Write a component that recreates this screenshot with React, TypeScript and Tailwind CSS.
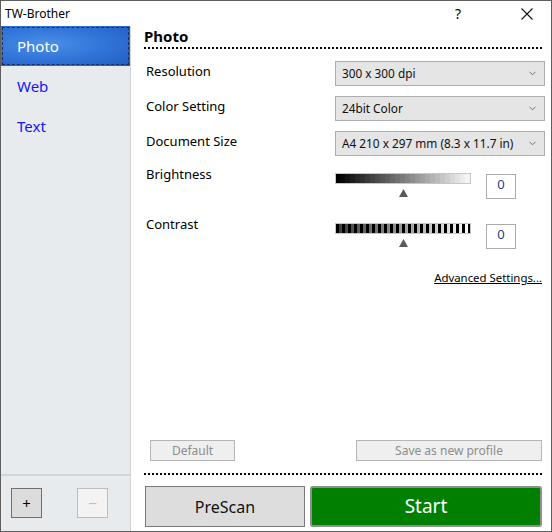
import React from 'react';

const FONT = "font-['Noto_Sans','Liberation_Sans',sans-serif]";

function SelectBox({ value }: { value: string }) {
  return (
    <div className="flex h-[25px] w-[210px] items-center justify-between border border-[#adadad] bg-[#e5e5e5] pl-[6px] pr-[8px] text-[11.8px] text-[#111]">
      <span>{value}</span>
      <svg width="7" height="5" viewBox="0 0 7 5">
        <path d="M0.5 0.8 L3.5 3.8 L6.5 0.8" fill="none" stroke="#707070" strokeWidth="1" />
      </svg>
    </div>
  );
}

function BrightnessBar() {
  const steps = Array.from({ length: 27 }, (_, i) => i);
  return (
    <svg width="136" height="11" viewBox="0 0 136 11">
      {steps.map((i) => {
        const v = Math.round((i / 26) * 245);
        return <rect key={i} x={i * 5} y={0} width={5.2} height={11} fill={`rgb(${v},${v},${v})`} />;
      })}
      <rect x="0.5" y="0.5" width="135" height="10" fill="none" stroke="#c6c6c6" />
    </svg>
  );
}

function ContrastBar() {
  const stripes = Array.from({ length: 23 }, (_, i) => i);
  return (
    <svg width="136" height="11" viewBox="0 0 136 11">
      {stripes.map((i) => {
        const v = Math.round(60 + (i / 22) * 195);
        return (
          <g key={i}>
            <rect x={i * 6} y={0} width={6} height={11} fill={`rgb(${v},${v},${v})`} />
            <rect x={i * 6 + 1} y={0} width={3} height={11} fill="#000" />
          </g>
        );
      })}
      <rect x="0.5" y="0.5" width="135" height="10" fill="none" stroke="#c6c6c6" />
    </svg>
  );
}

function Slider({ kind }: { kind: 'brightness' | 'contrast' }) {
  return (
    <div className="mt-[8px] flex items-start">
      <div className="flex w-[136px] flex-col items-center">
        {kind === 'brightness' ? <BrightnessBar /> : <ContrastBar />}
        <svg className="mt-[5px]" width="9" height="8" viewBox="0 0 9 8">
          <path d="M4.5 0 L9 8 L0 8 Z" fill="#5a5a5a" />
        </svg>
      </div>
      <div className="ml-[15px] mt-px flex h-[25px] w-[30px] justify-center border border-[#ababab] bg-white pt-[1px] text-[13px] leading-[16px] text-[#1c3f8c]">
        0
      </div>
    </div>
  );
}

export default function App() {
  return (
    <div className={`${FONT} flex h-[532px] w-[552px] flex-col border border-[#5e5e5e] bg-white text-black`}>
      {/* title bar */}
      <div className="flex h-[25px] items-center justify-between bg-white pl-[4px] pr-[18px]">
        <span className="text-[12px]">TW-Brother</span>
        <div className="flex items-center gap-[60px]">
          <span className="text-[14px]">?</span>
          <svg width="12" height="12" viewBox="0 0 12 12">
            <path d="M0.5 0.5 L11.5 11.5 M11.5 0.5 L0.5 11.5" stroke="#111" strokeWidth="1.1" />
          </svg>
        </div>
      </div>

      <div className="flex flex-1">
        {/* profile list */}
        <div className="flex w-[130px] flex-col border-r border-[#d4d4d4] bg-[#e8ebee]">
          <div className="flex-1 border-b-2 border-[#d2d5d8]">
            <div className="flex h-[40px] items-center bg-[radial-gradient(ellipse_at_35%_45%,#4a8fe8_0%,#2f72d6_55%,#1f5cc0_100%)] p-[1px]">
              <div className="flex h-full w-full items-center border border-dashed border-[#1b2f5c] pl-[14px] text-[15px] text-white">
                Photo
              </div>
            </div>
            <div className="flex h-[40px] items-center pl-[16px] text-[15px] text-[#1414f5]">Web</div>
            <div className="flex h-[40px] items-center pl-[16px] text-[15px] text-[#1414f5]">Text</div>
          </div>
          <div className="flex h-[55px] items-start gap-[35px] pl-[10px] pt-[12px]">
            <div className="flex h-[30px] w-[31px] items-center justify-center border border-[#707070] bg-[#dcdcdc] text-[15px] leading-none">
              +
            </div>
            <div className="flex h-[30px] w-[31px] items-center justify-center border border-[#bdbdbd] bg-[#f3f3f3] text-[15px] leading-none text-[#bdbdbd]">
              −
            </div>
          </div>
        </div>

        {/* settings */}
        <div className="flex flex-1 flex-col pl-[13px] pr-[9px]">
          <div className="mt-[1px] border-b-2 border-dotted border-black pb-[1px] text-[15px] font-bold leading-[19px]">
            Photo
          </div>

          <div className="mt-[12px] flex flex-col gap-[10px] pl-[2px]">
            <div className="flex items-start justify-between">
              <span className="pt-[1px] text-[13px] leading-[18px]">Resolution</span>
              <div className="-mr-[3px]">
                <SelectBox value="300 x 300 dpi" />
              </div>
            </div>
            <div className="flex items-start justify-between">
              <span className="pt-[1px] text-[13px] leading-[18px]">Color Setting</span>
              <div className="-mr-[3px]">
                <SelectBox value="24bit Color" />
              </div>
            </div>
            <div className="flex items-start justify-between">
              <span className="pt-[1px] text-[13px] leading-[18px]">Document Size</span>
              <div className="-mr-[3px]">
                <SelectBox value="A4 210 x 297 mm (8.3 x 11.7 in)" />
              </div>
            </div>
          </div>

          <div className="mt-[9px] flex items-start pl-[2px]">
            <span className="w-[189px] text-[13px] leading-[18px]">Brightness</span>
            <Slider kind="brightness" />
          </div>
          <div className="mt-[16px] flex items-start pl-[2px]">
            <span className="w-[189px] text-[13px] leading-[18px]">Contrast</span>
            <Slider kind="contrast" />
          </div>

          <div className="mt-[20px] flex justify-end">
            <span className="text-[11.4px] underline">Advanced Settings...</span>
          </div>

          <div className="flex-1" />

          <div className="flex items-center justify-between pl-[6px]">
            <div className="flex h-[21px] w-[85px] items-center justify-center border border-[#b5b5b5] bg-[#efefef] text-[12px] text-[#8d8d8d]">
              Default
            </div>
            <div className="flex h-[21px] w-[186px] items-center justify-center border border-[#b5b5b5] bg-[#efefef] text-[12px] text-[#8d8d8d]">
              Save as new profile
            </div>
          </div>

          <div className="mt-[12px] border-b-2 border-dotted border-black" />

          <div className="mb-[4px] mt-[11px] flex gap-[5px] pl-[1px]">
            <div className="flex h-[41px] w-[160px] items-center justify-center border border-[#7a7a7a] bg-[#dddddd] text-[16px] text-[#111]">
              PreScan
            </div>
            <div className="flex h-[41px] flex-1 items-center justify-center rounded-[3px] border-2 border-[#8f8f8f] bg-[#007f00] text-[19px] text-white">
              Start
            </div>
          </div>
        </div>
      </div>
    </div>
  );
}
